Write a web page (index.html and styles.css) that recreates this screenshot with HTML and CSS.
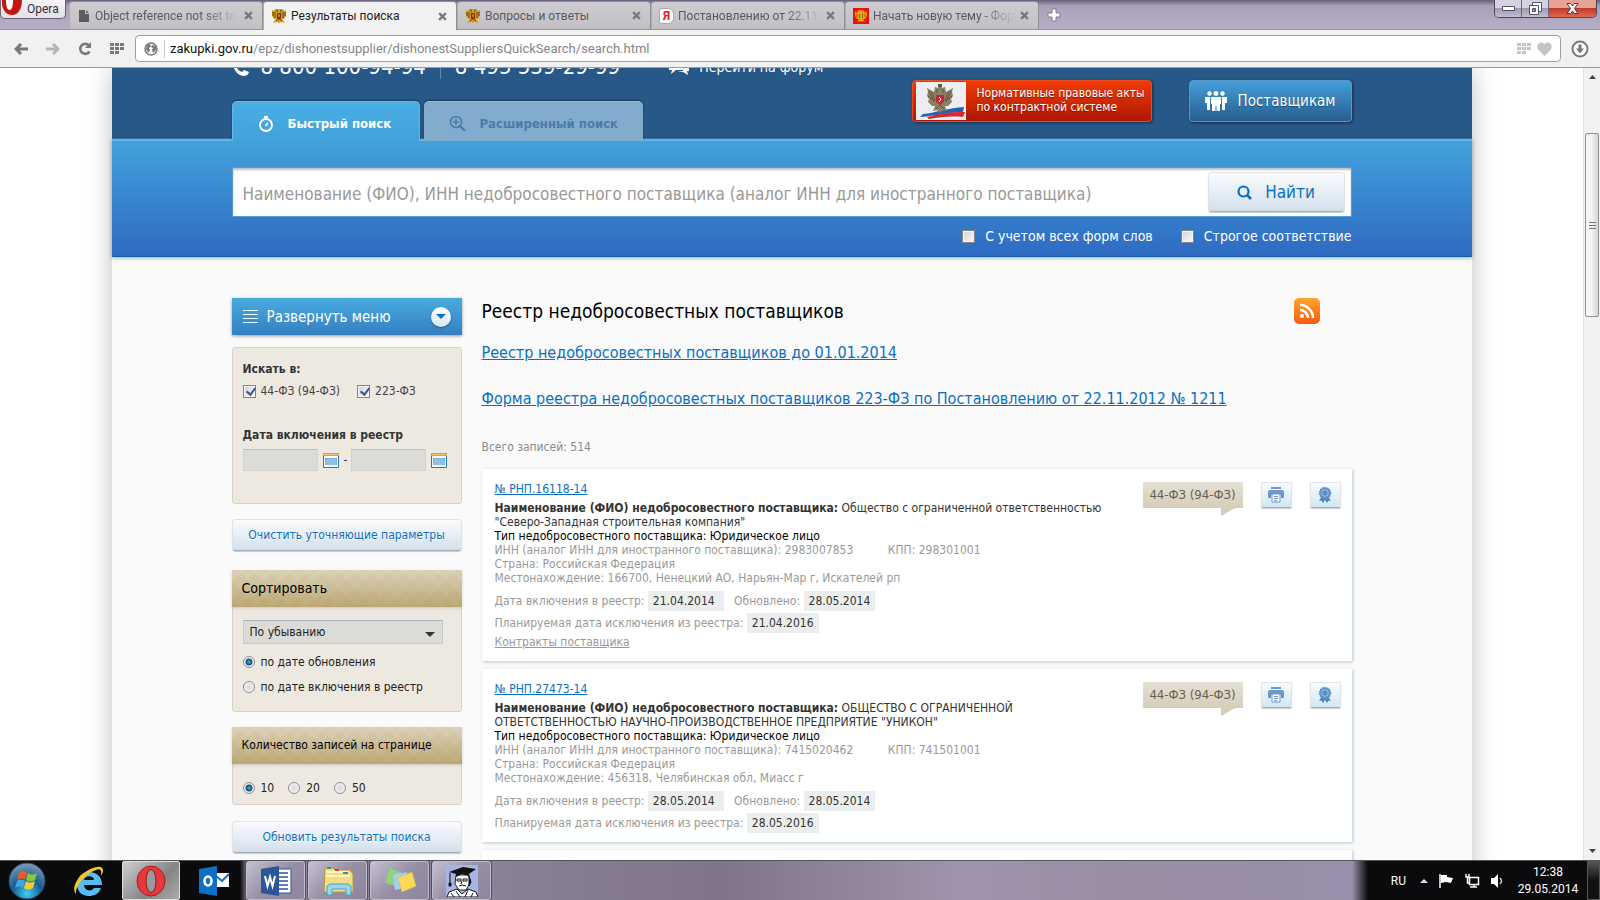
FILE: index.html
```html
<!DOCTYPE html>
<html lang="ru">
<head>
    <meta charset="UTF-8">
    <title>Результаты поиска</title>
    <link rel="stylesheet" href="styles.css">
</head>
<body>
<svg class="defs" width="0" height="0">
    <symbol id="eagle" viewBox="0 0 16 16">
        <path d="M1 2l2 1 1-2 2 1 2-1 2 1 2-1 1 2 2-1v6l-2 3h-2l3 4-4-1-2 1-2-1-4 1 3-4H3L1 8z" fill="#c9a21c"/>
        <path d="M2 4v4M4 4v6M12 4v6M14 4v4M6 1v3M10 1v3M5 13l2-2M11 13l-2-2" stroke="#5d4608" fill="none"/>
        <path d="M6 5h4v5l-2 2-2-2z" fill="#a81818"/>
        <path d="M8 6v3" stroke="#e9c15a"/>
    </symbol>
    <symbol id="eagle-gold" viewBox="0 0 16 16">
        <path d="M0 0h16v16H0z" fill="#ea1208"/>
        <path d="M2 3l2 2 1-3 2 1 1-2 1 2 2-1 1 3 2-2v5l-2 3h-2l2 3-3-1-1 1-1-1-3 1 2-3H4L2 8z" fill="#e5a413"/>
        <path d="M4 6v3M12 6v3M6.500 6v4M9.500 6v4" stroke="#a55c08" fill="none"/>
    </symbol>
    <symbol id="print" viewBox="0 0 16 16">
        <path d="M3 0h10v2H3zM1 3h14l1 2v6h-3V8H3v3H0V5z" fill="#7199c8"/>
        <path d="M4 7h8v8H4z" fill="#fff" stroke="#7199c8"/>
        <path d="M6 9.500h4M6 11.500h4M6 13.500h3" stroke="#7199c8"/>
    </symbol>
    <symbol id="award" viewBox="0 0 14 16">
        <path d="M4 9L1 14l2.500-.5L5 16l2-3 2 3 1.500-2.500L13 14l-3-5z" fill="#4e83bd"/>
        <circle cx="7" cy="6" r="5.500" fill="#5f90c6" stroke="#5f90c6" stroke-width="1.500" stroke-dasharray="1.500 1"/>
        <circle cx="7" cy="6" r="3.300" fill="#5a8cc3" stroke="#a5c3e2"/>
    </symbol>
    <symbol id="calendar" viewBox="0 0 16 15">
        <path d="M.5.5h15v14H.5z" fill="#fff" stroke="#2779b5"/>
        <path d="M0 0h16v3H0z" fill="#f7941d"/>
        <path d="M1 1h14v1H1z" fill="#fbc477"/>
        <path d="M2 5h12v7H2z" fill="#5b9fd6"/>
        <path d="M2 7h12M2 9h12M2 11h12M4 5v8M6 5v8M8 5v8M10 5v8M12 5v8" stroke="#c5e0f3" stroke-width=".6"/>
    </symbol>
    <symbol id="grid" viewBox="0 0 14 11">
        <path d="M0 0h4v3H0zM5 0h4v3H5zM10 0h4v3h-4zM0 4h4v3H0zM5 4h4v3H5zM10 4h4v3h-4zM0 8h4v3H0zM5 8h4v3H5z" fill="currentColor"/>
    </symbol>
    <symbol id="close" viewBox="0 0 8 8">
        <path d="M1 1l6 6M7 1L1 7" stroke="#77777a" stroke-width="2" fill="none"/>
    </symbol>
</svg>

<div class="tabbar">
    <button class="opera"><svg width="20" height="16" viewBox="0 0 20 16"><path d="M0 0h20c0 9-4 15-10 15C5 15 1 11 0 5z" fill="#c41712"/><path d="M4 0h7c0 6-1 10-3.500 10S4 6 4 0z" fill="#fff"/></svg>Opera</button>
    <div class="tabs">
        <div class="tab first"><svg width="10" height="12" viewBox="0 0 10 12"><path d="M0 0h6v4h4v8H0z" fill="#5c5c5e"/><path d="M7 0l3 3H7z" fill="#5c5c5e"/></svg><span class="fade">Object reference not set to an</span><svg class="x"><use href="#close"/></svg></div>
        <div class="tab active"><svg width="16" height="16"><use href="#eagle"/></svg><span>Результаты поиска</span><svg class="x"><use href="#close"/></svg></div>
        <div class="tab"><svg width="16" height="16"><use href="#eagle"/></svg><span>Вопросы и ответы</span><svg class="x"><use href="#close"/></svg></div>
        <div class="tab"><span class="ya">Я</span><span class="fade">Постановлению от 22.11.2012</span><svg class="x"><use href="#close"/></svg></div>
        <div class="tab"><svg width="16" height="16"><use href="#eagle-gold"/></svg><span class="fade">Начать новую тему - Форум</span><svg class="x"><use href="#close"/></svg></div>
    </div>
    <button class="plus" aria-label="Новая вкладка"><svg width="14" height="14" viewBox="0 0 14 14"><path d="M5 1h4v4h4v4H9v4H5V9H1V5h4z" fill="#fff" stroke="#827a90"/></svg></button>
    <div class="winbtns">
        <button aria-label="Свернуть"><svg width="13" height="6" viewBox="0 0 13 6"><path d="M.5.5h12v4H.5z" fill="#fff" stroke="#52526a"/></svg></button>
        <button aria-label="Развернуть"><svg width="13" height="13" viewBox="0 0 13 13"><path d="M3.500.5h9v9h-9z" fill="#fff" stroke="#52526a"/><path d="M.5 3.500h9v9h-9z" fill="#fff" stroke="#52526a"/><path d="M3.500 6.500h3v3h-3z" fill="#8a84a0" stroke="#52526a"/></svg></button>
        <button class="quit" aria-label="Закрыть"><svg width="13" height="11" viewBox="0 0 13 11"><path d="M1 .5h3.500l2 2.500 2-2.500H12L8.500 5.500l3.500 5H8.500l-2-2.500-2 2.500H1l3.500-5z" fill="#fff" stroke="#5c3036"/></svg></button>
    </div>
</div>

<div class="addressbar">
    <button aria-label="Назад"><svg width="14" height="12" viewBox="0 0 14 12"><path d="M7 1L2 6l5 5M2 6h12" fill="none" stroke="#77797c" stroke-width="3"/></svg></button>
    <button aria-label="Вперед"><svg width="14" height="12" viewBox="0 0 14 12"><path d="M7 1l5 5-5 5M0 6h12" fill="none" stroke="#b5b5b5" stroke-width="3"/></svg></button>
    <button aria-label="Обновить"><svg width="14" height="14" viewBox="0 0 14 14"><path d="M11.500 9.500A5 5 0 1 1 11 3.500" fill="none" stroke="#77797c" stroke-width="2.600"/><path d="M13 0v6H7z" fill="#77797c"/></svg></button>
    <button class="speed" aria-label="Экспресс-панель"><svg width="14" height="11"><use href="#grid"/></svg></button>
    <div class="url">
        <svg width="14" height="14" viewBox="0 0 14 14"><circle cx="7" cy="7" r="6" fill="#fff" stroke="#77797c" stroke-width="1.500"/><path d="M3 3l3-1 1 2-2 2 1 2-2 3-2-4zM8 3l4 1v4l-3 3-1-3 1-2-2-1z" fill="#77797c"/></svg>
        <a href="#"><b>zakupki.gov.ru</b>/epz/dishonestsupplier/dishonestSuppliersQuickSearch/search.html</a>
        <svg class="pale" width="14" height="11"><use href="#grid"/></svg>
        <svg width="15" height="14" viewBox="0 0 15 14"><path d="M7.500 14L1 7.500C-1.500 3 3 -2 7.500 2 12-2 16.500 3 14 7.500z" fill="#c4c4c4"/></svg>
    </div>
    <button class="down" aria-label="Загрузки"><svg width="18" height="18" viewBox="0 0 18 18"><circle cx="9" cy="9" r="7.500" fill="#fff" stroke="#77797c" stroke-width="2"/><path d="M7.500 4.500h3v4H13l-4 5-4-5h2.500z" fill="#77797c"/></svg></button>
</div>

<div class="view">
    <div class="scroller">
        <div class="wrapper">
            <div class="header">
                <div class="inner">
                    <div class="left">
                        <div class="phones">
                            <svg width="18" height="18" viewBox="0 0 18 18"><path d="M3 1l3 4-2 2c1 4 3 6 6 7l2-2 5 2c-1 3-3 4-6 4C5 17 1 11 1 5c0-2 1-3 2-4z" fill="#fff"/></svg>
                            <span>8 800 100-94-94</span>
                            <i></i>
                            <span>8 495 539-29-99</span>
                            <a href="#"><svg width="20" height="18" viewBox="0 0 20 18"><path d="M0 0h14v12H7l-5 4 1-4H0z" fill="#fff"/><path d="M15 5l5 2v6h-2l1 4-5-3H8l6-1z" fill="#fff"/></svg>Перейти на форум</a>
                        </div>
                        <div class="searchtabs">
                            <a href="#" class="on"><svg width="16" height="16" viewBox="0 0 16 16"><circle cx="8" cy="9" r="6" fill="none" stroke="#fff" stroke-width="1.800"/><path d="M6 1h4M8 1v2M7.500 10L10 7" stroke="#fff" stroke-width="1.800"/></svg>Быстрый поиск</a>
                            <a href="#" class="off"><svg width="17" height="17" viewBox="0 0 17 17"><circle cx="7" cy="7" r="5.500" fill="none" stroke="#4c7ba8" stroke-width="1.600"/><path d="M7 4v6M4 7h6" stroke="#4c7ba8" stroke-width="1.600"/><path d="M11 11l5 5" stroke="#4c7ba8" stroke-width="2.400"/></svg>Расширенный поиск</a>
                        </div>
                    </div>
                    <div class="right">
                        <a href="#" class="law"><svg width="52" height="38" viewBox="0 0 52 38">
                            <path d="M1 0h50v38H1z" fill="#eceef2"/>
                            <path d="M8 32c12-1 24-6 41-7l-1 5c-14 0-28 4-43 5z" fill="#1e66b4"/>
                            <path d="M12 35c14-4 24-5 38-5l-2 5c-14-1-22 0-34 2z" fill="#dd2630"/>
                            <path d="M12 6l7 4 1-5 3 1 2-4 2 4 3-1 1 5 7-4-1 4 1 4-2 3 1 3-4 4-3 0 2 5-4-1-3 3-3-3-4 1 2-5-3 0-4-4 1-3-2-3 1-4z" fill="#8a8162"/>
                            <path d="M14 9l5 11M17 10l3 9M36 9l-5 11M33 10l-3 9M21 27l4-4 4 4M22 7v4M28 7v4M13 14l4 4M37 14l-4 4" stroke="#5e563a" fill="none"/>
                            <path d="M21 13h8v7l-4 3-4-3z" fill="#c22835"/><path d="M24 15l2 2-2 3" stroke="#fff" fill="none"/>
                            <path d="M23 2h4v3h-4z" fill="#645c40"/></svg><span>Нормативные правовые акты<br>по контрактной системе</span></a>
                        <a href="#" class="suppliers"><svg width="22" height="20" viewBox="0 0 22 20"><g fill="#fff"><circle cx="4.500" cy="2.500" r="2.200"/><circle cx="11" cy="2.500" r="2.400"/><circle cx="17.500" cy="2.500" r="2.200"/><path d="M0 6h5v13H2v-7H0zM17 6h5v6h-2v7h-3zM6 6h10v7h-1v7h-3.500v-5h-1v5H7v-7H6z"/></g></svg>Поставщикам</a>
                    </div>
                </div>
            </div>

            <form class="search">
                <div class="inner">
                    <div class="searchbox">
                        <input type="text" aria-label="Поиск" placeholder="Наименование (ФИО), ИНН недобросовестного поставщика (аналог ИНН для иностранного поставщика)">
                        <button type="button"><svg width="15" height="15" viewBox="0 0 15 15"><circle cx="6.500" cy="6.500" r="5" fill="none" stroke="#0a6fc2" stroke-width="2.200"/><path d="M10 10l4 4" stroke="#0a6fc2" stroke-width="2.500"/></svg>Найти</button>
                    </div>
                    <div class="options">
                        <label><input type="checkbox">С учетом всех форм слов</label>
                        <label><input type="checkbox">Строгое соответствие</label>
                    </div>
                </div>
            </form>

            <div class="main">
                <div class="sidebar">
                    <button class="menu"><svg width="15" height="14" viewBox="0 0 15 14"><path d="M0 .5h15M0 4.500h15M0 8.500h15M0 12.500h15" stroke="#e9f6fd"/></svg><span>Развернуть меню</span><i><svg width="10" height="5" viewBox="0 0 10 5"><path d="M0 0h10L5 5z" fill="#0a72c0"/></svg></i></button>
                    <div class="panel filter">
                        <h4>Искать в:</h4>
                        <div class="checks">
                            <label><input type="checkbox" checked>44-ФЗ (94-ФЗ)</label>
                            <label><input type="checkbox" checked>223-ФЗ</label>
                        </div>
                        <h4>Дата включения в реестр</h4>
                        <div class="dates">
                            <input type="text" aria-label="Дата с">
                            <button aria-label="Календарь"><svg width="16" height="15"><use href="#calendar"/></svg></button>
                            <span>-</span>
                            <input type="text" aria-label="Дата по">
                            <button aria-label="Календарь"><svg width="16" height="15"><use href="#calendar"/></svg></button>
                        </div>
                    </div>
                    <button class="btn">Очистить уточняющие параметры</button>
                    <div class="panel sort">
                        <h3>Сортировать</h3>
                        <div class="body">
                            <div class="select"><select aria-label="Сортировать"><option>По убыванию</option><option>По возрастанию</option></select></div>
                            <label><input type="radio" name="sort" checked>по дате обновления</label>
                            <label><input type="radio" name="sort">по дате включения в реестр</label>
                        </div>
                    </div>
                    <div class="panel count">
                        <h3>Количество записей на странице</h3>
                        <div class="body">
                            <label><input type="radio" name="count" checked>10</label>
                            <label><input type="radio" name="count">20</label>
                            <label><input type="radio" name="count">50</label>
                        </div>
                    </div>
                    <button class="btn">Обновить результаты поиска</button>
                </div>

                <div class="content">
                    <div class="title">
                        <h1>Реестр недобросовестных поставщиков</h1>
                        <a href="#" aria-label="RSS"><svg width="26" height="26" viewBox="0 0 26 26"><defs><linearGradient id="rss" x2="0" y2="1"><stop stop-color="#fda52e"/><stop offset="1" stop-color="#f65a0d"/></linearGradient></defs><rect width="26" height="26" rx="5" fill="url(#rss)"/><circle cx="8" cy="18" r="2" fill="#fff"/><path d="M6 12a8 8 0 0 1 8 8M6 7a13 13 0 0 1 13 13" fill="none" stroke="#fff" stroke-width="2.600"/></svg></a>
                    </div>
                    <a class="biglink" href="#">Реестр недобросовестных поставщиков до 01.01.2014</a>
                    <a class="biglink" href="#">Форма реестра недобросовестных поставщиков 223-ФЗ по Постановлению от 22.11.2012 № 1211</a>
                    <p class="total">Всего записей: 514</p>

                    <div class="card">
                        <div class="info">
                            <a class="num" href="#">№ РНП.16118-14</a>
                            <p class="name"><b>Наименование (ФИО) недобросовестного поставщика:</b> Общество с ограниченной ответственностью "Северо-Западная строительная компания"</p>
                            <p class="type">Тип недобросовестного поставщика: Юридическое лицо</p>
                            <p>ИНН (аналог ИНН для иностранного поставщика): 2983007853 <span class="kpp">КПП: 298301001</span></p>
                            <p>Страна: Российская Федерация</p>
                            <p>Местонахождение: 166700, Ненецкий АО, Нарьян-Мар г, Искателей рп</p>
                            <p class="date">Дата включения в реестр: <span class="val long">21.04.2014</span> Обновлено: <span class="val">28.05.2014</span></p>
                            <p class="date">Планируемая дата исключения из реестра: <span class="val">21.04.2016</span></p>
                            <a class="contracts" href="#">Контракты поставщика</a>
                        </div>
                        <span class="law-tag">44-ФЗ (94-ФЗ)</span>
                        <button aria-label="Печать"><svg width="16" height="16"><use href="#print"/></svg></button>
                        <button aria-label="Подпись"><svg width="14" height="16"><use href="#award"/></svg></button>
                    </div>

                    <div class="card">
                        <div class="info">
                            <a class="num" href="#">№ РНП.27473-14</a>
                            <p class="name"><b>Наименование (ФИО) недобросовестного поставщика:</b> ОБЩЕСТВО С ОГРАНИЧЕННОЙ ОТВЕТСТВЕННОСТЬЮ НАУЧНО-ПРОИЗВОДСТВЕННОЕ ПРЕДПРИЯТИЕ "УНИКОН"</p>
                            <p class="type">Тип недобросовестного поставщика: Юридическое лицо</p>
                            <p>ИНН (аналог ИНН для иностранного поставщика): 7415020462 <span class="kpp">КПП: 741501001</span></p>
                            <p>Страна: Российская Федерация</p>
                            <p>Местонахождение: 456318, Челябинская обл, Миасс г</p>
                            <p class="date">Дата включения в реестр: <span class="val long">28.05.2014</span> Обновлено: <span class="val">28.05.2014</span></p>
                            <p class="date">Планируемая дата исключения из реестра: <span class="val">28.05.2016</span></p>
                        </div>
                        <span class="law-tag">44-ФЗ (94-ФЗ)</span>
                        <button aria-label="Печать"><svg width="16" height="16"><use href="#print"/></svg></button>
                        <button aria-label="Подпись"><svg width="14" height="16"><use href="#award"/></svg></button>
                    </div>

                    <div class="card next"></div>
                </div>
            </div>
        </div>
    </div>
    <div class="scrollbar">
        <svg width="7" height="4" viewBox="0 0 7 4"><path d="M0 4h7L3.500 0z" fill="#444"/></svg>
        <div class="thumb"><i></i></div>
        <svg width="7" height="4" viewBox="0 0 7 4"><path d="M0 0h7L3.500 4z" fill="#444"/></svg>
    </div>
</div>

<div class="taskbar">
    <div class="quick">
        <button aria-label="Пуск"><svg width="38" height="38" viewBox="0 0 38 38"><defs><radialGradient id="orb" cy=".85" r=".9"><stop stop-color="#3ed0f5"/><stop offset=".45" stop-color="#175d92"/><stop offset="1" stop-color="#8da3b8"/></radialGradient></defs><circle cx="19" cy="19" r="18" fill="url(#orb)" stroke="#2c4258"/><path d="M11 11c3-2 5-2 8 0l-2 7c-3-2-5-2-8 0z" fill="#ec5a24"/><path d="M20 11c3 2 5 2 9 0l-2 7c-3 2-6 2-9 0z" fill="#8cc63e"/><path d="M9 19c3-2 5-2 8 0l-2 7c-3-2-5-2-8 0z" fill="#43a4e4"/><path d="M18 19c3 2 5 2 9 0l-2 7c-4 2-6 2-9 0z" fill="#fcca2b"/></svg></button>
        <button aria-label="Internet Explorer"><svg width="34" height="32" viewBox="0 0 34 32"><path d="M31 20H13c0 6 8 7 10 3h7c-2 6-7 8-12 8C10 31 6 26 6 19S11 7 18 7c8 0 13 5 13 13zm-8-5c0-5-9-5-10 0z" fill="#57bcf1"/><path d="M5 29C-1 23 9 5 26 2c6-1 8 3 4 9 1-6-1-8-5-6C15 8 4 21 5 29z" fill="#f9c526"/></svg></button>
        <button class="lit" aria-label="Opera"><svg width="30" height="32" viewBox="0 0 30 32"><ellipse cx="15" cy="16" rx="14" ry="15" fill="#e8383e" stroke="#a01e24"/><ellipse cx="15" cy="16" rx="5" ry="11.500" fill="#9a9a9a" stroke="#8e191d"/></svg></button>
        <button aria-label="Outlook"><svg width="32" height="32" viewBox="0 0 32 32"><path d="M18 8h13v14H18z" fill="#fff"/><path d="M18 11l6 5 7-7" fill="none" stroke="#0a6cc0" stroke-width="2"/><path d="M1 4l18-3v30L1 28z" fill="#0f6fc5"/><ellipse cx="10" cy="16" rx="3.500" ry="4.500" fill="none" stroke="#fff" stroke-width="2.600"/></svg></button>
    </div>
    <div class="tasks">
        <button aria-label="Word"><svg width="32" height="32" viewBox="0 0 32 32"><path d="M17 4h14v24H17z" fill="#fff" stroke="#2b579a"/><path d="M19 8h9M19 12h9M19 16h9M19 20h9M19 24h9" stroke="#2b579a" stroke-width="1.500"/><path d="M1 4l18-3v30L1 28z" fill="#2b579a"/><path d="M5 11l2.500 10L10 12l2.500 9L15 11" fill="none" stroke="#fff" stroke-width="2"/></svg></button>
        <button aria-label="Проводник"><svg width="34" height="32" viewBox="0 0 34 32"><path d="M4 3h8l2 2h15l3 4v18H3z" fill="#f4dd87" stroke="#b8963d"/><path d="M5 7h22M5 11h24" stroke="#fff3bb" stroke-width="2"/><path d="M6 3h4" stroke="#29a84d" stroke-width="2"/><path d="M14 5h4" stroke="#d53d30" stroke-width="2"/><path d="M22 8h5" stroke="#318ad0" stroke-width="2"/><path d="M6 30V21l3-2h18l3 2v9h-5v-6H11v6z" fill="#98d7ee" stroke="#4a9fc4"/></svg></button>
        <button aria-label="Записки"><svg width="34" height="28" viewBox="0 0 34 28"><path d="M7 1l12 5-6 13-11-3z" fill="#91d37c"/><path d="M10 8l14-3 2 15-14 3z" fill="#a3cff0"/><path d="M15 11l14-6 4 14-14 6z" fill="#fbd957" stroke="#deb93a" stroke-width=".5"/></svg></button>
        <button aria-label="Консультант"><svg width="32" height="32" viewBox="0 0 32 32"><path d="M0 0h32v32H0z" fill="#a8b4e4"/><path d="M10 10h13l1 8-4 7h-7l-4-6z" fill="#fff" stroke="#222"/><path d="M1 32l2-5 8-3 5 5 6-5 8 3 2 5z" fill="#fff" stroke="#111"/><path d="M10 26l4 6M22 25l-3 7M5 28l3 4M27 28l-2 4" stroke="#111"/><path d="M3 7l14-5 13 2-7 5v2l-7-2-6 3V9z" fill="#111"/><path d="M4 8v10M3 18h2v3H3zM23 11l2 6-2 4z" fill="#111" stroke="#111"/><path d="M11 14h4v2h-4zM17 14h4v2h-4zM13 21l3-1 4 1M16 16l-1 3" fill="none" stroke="#111"/></svg></button>
    </div>
    <div class="tray">
        <span class="lang">RU</span>
        <svg width="8" height="4" viewBox="0 0 8 4"><path d="M0 4h8L4 0z" fill="#dfe4ea"/></svg>
        <svg width="15" height="14" viewBox="0 0 15 14"><path d="M1 0v14" stroke="#fff" stroke-width="1.500"/><path d="M2 1h6v2l6 1-2 5-5-1-5 1z" fill="#fff"/></svg>
        <svg width="15" height="14" viewBox="0 0 15 14"><path d="M4.500 3.500h9v7h-9zM5 13h7M9 11v2M1 0v3h3V0M2.500 3v6H5" fill="none" stroke="#fff" stroke-width="1.500"/></svg>
        <svg width="13" height="14" viewBox="0 0 13 14"><path d="M0 4h3l4-4v14l-4-4H0z" fill="#fff"/><path d="M9 4q3 3 0 6" fill="none" stroke="#ccc" stroke-width="1.500"/></svg>
        <div class="clock">12:38<br>29.05.2014</div>
        <button aria-label="Показать рабочий стол"></button>
    </div>
</div>
</body>
</html>
```
FILE: styles.css
```css
* {
    margin: 0;
    padding: 0;
    box-sizing: border-box;
}

body {
    height: 100vh;
    display: flex;
    flex-direction: column;
    overflow: hidden;
    font-size: 12px;
    line-height: 14px;
    font-family: Tahoma, "DejaVu Sans Condensed", "Noto Sans", sans-serif;
    color: #333;
}

button, input, select {
    font: inherit;
    color: inherit;
    border: 0;
    background: none;
}

svg {
    flex: none;
    display: block;
}

.defs {
    position: absolute;
}

/* browser window */
.tabbar, .addressbar, .taskbar {
    font-family: "Segoe UI", Roboto, sans-serif;
}

.tabbar {
    height: 30px;
    flex: none;
    display: flex;
    background: linear-gradient(#66607a 0, #aaa1b8 6px, #b7aec8 100%);
    border-bottom: 1px solid #98969c;
}

.opera {
    width: 66px;
    height: 19px;
    display: flex;
    gap: 5px;
    padding-left: 1px;
    background: linear-gradient(#f7f5f8, #e2dfe5);
    border: 1px solid #66646a;
    border-top: 0;
    border-radius: 0 0 5px 5px;
    line-height: 19px;
}

.tabs {
    display: flex;
    margin: 1px 0 0 3px;
}

.tab {
    width: 194px;
    height: 28px;
    display: flex;
    align-items: center;
    gap: 4px;
    padding: 0 9px 0 7px;
    background: linear-gradient(#cfccd1, #c3c0c5);
    border: 1px solid #8f8d93;
    border-bottom: 0;
    border-left-color: #b0aeb3;
    border-radius: 4px 4px 0 0;
    color: #5a5a5d;
}

.tab.first {
    gap: 6px;
    padding-left: 9px;
}

.tab.active {
    height: 29px;
    background: #f1f1f2;
    color: #222;
    margin-bottom: -1px;
}

.tab span {
    flex: 1;
    min-width: 0;
    overflow: hidden;
    white-space: nowrap;
    line-height: 18px;
}

.tab .fade {
    -webkit-mask-image: linear-gradient(90deg, #000 75%, transparent);
    mask-image: linear-gradient(90deg, #000 75%, transparent);
}

.tab .x {
    width: 9px;
    height: 9px;
}

.tab .ya {
    flex: none;
    width: 15px;
    height: 16px;
    text-align: center;
    background: #fff;
    border: 1px solid #aaa;
    border-radius: 2px 6px 6px 2px;
    color: #e02020;
    font-weight: bold;
    line-height: 14px;
}

.plus {
    width: 30px;
    display: flex;
    align-items: center;
    justify-content: center;
}

.winbtns {
    display: flex;
    height: 18px;
    margin: 0 3px 0 auto;
    border: 1px solid #4b475a;
    border-top: 0;
    border-radius: 0 0 5px 5px;
    overflow: hidden;
}

.winbtns button {
    width: 27px;
    display: flex;
    align-items: center;
    justify-content: center;
    background: linear-gradient(#d6d2df 50%, #9f98b0 50%, #c5bfd2);
    border-right: 1px solid #6b667c;
}

.winbtns .quit {
    width: 47px;
    background: linear-gradient(#e5a295 45%, #c2392a 50%, #dd6a50);
    border: 0;
}

.addressbar {
    height: 38px;
    flex: none;
    display: flex;
    align-items: center;
    padding: 0 5px;
    background: #f1f1f2;
    border-bottom: 1px solid #9d9d9f;
}

.addressbar button {
    width: 32px;
    height: 30px;
    display: flex;
    align-items: center;
    justify-content: center;
    color: #77797c;
}

.addressbar .speed {
    margin-right: 2px;
}

.addressbar .down {
    width: 30px;
}

.url {
    flex: 1;
    height: 27px;
    display: flex;
    align-items: center;
    gap: 6px;
    margin-right: 4px;
    padding: 0 8px;
    background: #fff;
    border: 1px solid #a0a0a2;
    border-radius: 4px;
}

.url a {
    flex: 1;
    padding-left: 5px;
    border-left: 1px solid #ccc;
    font-size: 13px;
    line-height: 18px;
    color: #85858a;
    text-decoration: none;
}

.url b {
    font-weight: normal;
    color: #111;
}

.url .pale {
    color: #c4c4c4;
}

/* page */
.view {
    flex: 1;
    min-height: 0;
    display: flex;
    overflow: hidden;
    background: #fff;
}

.scroller {
    flex: 1;
    overflow: hidden;
}

.wrapper {
    max-width: 1360px;
    min-height: 100%;
    margin: 0 auto;
    background: #fafafa;
    box-shadow: 0 0 24px rgba(0, 0, 0, .25);
}

.inner {
    max-width: 1120px;
    margin: 0 auto;
}

.header {
    background: #285888;
    border-bottom: 1px solid #3b7bb3;
}

.header .inner {
    height: 70px;
    display: flex;
    justify-content: space-between;
}

.left {
    display: flex;
    flex-direction: column;
    justify-content: space-between;
}

.phones {
    display: flex;
    align-items: center;
    gap: 11px;
    margin-top: -13px;
    height: 24px;
    font-size: 22px;
    line-height: 24px;
    color: #fff;
    white-space: nowrap;
}

.phones i {
    width: 1px;
    height: 24px;
    margin: 0 3px;
    background: #6388ad;
}

.phones a {
    display: flex;
    gap: 10px;
    margin-left: 38px;
    font-size: 14px;
    line-height: 18px;
    color: #fff;
    text-decoration: none;
}

.searchtabs {
    display: flex;
    align-items: flex-end;
    gap: 4px;
    margin-bottom: -3px;
}

.searchtabs a {
    display: flex;
    align-items: center;
    gap: 14px;
    height: 40px;
    padding: 4px 0 0 25px;
    border-radius: 5px 5px 0 0;
    font-size: 13px;
    font-weight: bold;
    text-decoration: none;
}

.searchtabs .on {
    position: relative;
    width: 188px;
    background: linear-gradient(#49afe4, #43a1da);
    border: 1px solid #66b7ec;
    border-bottom: 0;
    box-shadow: 0 -1px 2px rgba(0, 0, 0, .4);
    color: #fff;
}

.searchtabs .off {
    width: 219px;
    background: #81accd;
    border-top: 1px solid #95bbd8;
    box-shadow: 0 -1px 2px rgba(0, 0, 0, .4);
    color: #4c7ba8;
}

.right {
    display: flex;
    gap: 37px;
    padding-top: 12px;
}

.right a {
    height: 42px;
    display: flex;
    align-items: center;
    border-radius: 4px;
    box-shadow: 1px 1px 3px rgba(0, 0, 0, .5);
    color: #fff;
    text-decoration: none;
    text-shadow: 0 1px 1px rgba(0, 0, 0, .4);
}

.right .law {
    width: 240px;
    gap: 10px;
    padding-left: 2px;
    background: linear-gradient(#f13c06, #ad1702);
    border: 1px solid #f04a20;
    white-space: nowrap;
}

.right .law span {
    padding-bottom: 2px;
}

.right .suppliers {
    width: 163px;
    gap: 11px;
    padding-left: 15px;
    background: linear-gradient(#43a0da, #285c8e);
    border: 1px solid #5c94c4;
    font-size: 15px;
}

.search {
    height: 118px;
    padding-top: 26px;
    background: linear-gradient(#43a1da, #2e6ac2);
    border-top: 2px solid #66b2e8;
    border-bottom: 1px solid #1060b0;
    box-shadow: 0 1px 4px rgba(0, 0, 0, .35);
}

.searchbox {
    display: flex;
    height: 50px;
    padding: 4px 6px 4px 10px;
    background: #fff;
    border: 1px solid #50a0d8;
    border-radius: 2px;
    box-shadow: inset 0 2px 2px rgba(0, 0, 0, .25);
}

.searchbox input {
    flex: 1;
    min-width: 0;
    padding-top: 3px;
    font-size: 17px;
    outline: 0;
}

.searchbox input::placeholder {
    color: #999;
}

.searchbox button, .btn, .card button {
    background: linear-gradient(#fafbfd, #d3e0ec);
    border: 1px solid #dde3e9;
    border-bottom-color: #a8adb3;
    border-radius: 4px;
    box-shadow: 0 1px 1px rgba(0, 0, 0, .2);
    color: #0a6fc2;
}

.searchbox button {
    width: 137px;
    display: flex;
    align-items: center;
    justify-content: center;
    gap: 13px;
    font-size: 17px;
}

.options {
    display: flex;
    justify-content: flex-end;
    gap: 28px;
    margin-top: 10px;
    font-size: 14px;
    line-height: 18px;
    color: #fff;
}

.options label {
    display: flex;
    align-items: center;
    gap: 10px;
}

input[type=checkbox] {
    appearance: none;
    flex: none;
    width: 13px;
    height: 13px;
    background: linear-gradient(135deg, #cfd2d6, #fafafa);
    border: 1px solid #83858a;
    box-shadow: inset 0 0 0 1px #f4f4f4;
}

.checks input:checked::before {
    content: "";
    display: block;
    width: 4px;
    height: 7px;
    margin: 0 0 0 4px;
    border: solid #41529a;
    border-width: 0 2px 2px 0;
    transform: rotate(38deg);
}

input[type=radio] {
    appearance: none;
    flex: none;
    width: 12px;
    height: 12px;
    background: radial-gradient(#d8dade, #f6f6f6);
    border: 1px solid #8c8e92;
    border-radius: 50%;
    box-shadow: inset 0 0 0 1px #f4f4f4;
}

input[type=radio]:checked {
    background: radial-gradient(circle, #4db2e4 0, #12496c 3px, #e8e8e8 4px);
}

.main {
    max-width: 1120px;
    margin: 0 auto;
    padding-top: 41px;
    display: flex;
    gap: 20px;
}

.sidebar {
    flex: none;
    width: 230px;
}

.menu {
    width: 100%;
    height: 37px;
    display: flex;
    align-items: center;
    gap: 9px;
    padding: 0 11px;
    background: linear-gradient(#48acde, #347fc2);
    box-shadow: 0 1px 3px rgba(0, 0, 0, .4);
    color: #fff;
    font-size: 15px;
    text-align: left;
}

.menu span {
    flex: 1;
    white-space: nowrap;
}

.menu i {
    width: 20px;
    height: 20px;
    display: flex;
    align-items: center;
    justify-content: center;
    background: linear-gradient(#fff, #d3e9f4);
    border-radius: 50%;
    box-shadow: 0 1px 2px rgba(0, 0, 0, .4);
}

.panel {
    background: #ede9e1;
    border: 1px solid #d7d2c5;
    border-radius: 3px;
}

.panel label {
    display: flex;
    align-items: center;
    gap: 6px;
    color: #222;
    white-space: nowrap;
}

.filter {
    height: 157px;
    margin: 12px 0 15px;
    padding: 14px 10px;
}

.filter h4 {
    font-size: 12px;
    white-space: nowrap;
}

.checks {
    display: flex;
    gap: 17px;
    margin: 8px 0 30px;
}

.filter label {
    gap: 5px;
    color: #444;
}

.dates {
    display: flex;
    align-items: center;
    margin-top: 7px;
}

.dates input {
    width: 75px;
    height: 22px;
    background: #dbdcd7;
    border: 1px solid #d2d2cc;
    border-top-color: #bfc0bb;
}

.dates button {
    margin: 0 5px;
}

.dates span {
    margin-right: 4px;
}

.btn {
    display: block;
    width: 100%;
    height: 32px;
    text-shadow: 0 1px 0 #fff;
    white-space: nowrap;
}

.sort {
    margin: 19px 0 15px;
}

.panel h3 {
    height: 37px;
    margin: -1px -1px 0;
    padding-left: 10px;
    background: repeating-linear-gradient(45deg, rgba(120, 90, 20, .07) 0 1px, transparent 1px 2px), repeating-linear-gradient(-45deg, rgba(120, 90, 20, .07) 0 1px, transparent 1px 2px), linear-gradient(#e2dac3, #bfad7b);
    box-shadow: 0 1px 3px rgba(0, 0, 0, .15);
    font-size: 12px;
    font-weight: normal;
    line-height: 37px;
    color: #000;
    white-space: nowrap;
}

.panel.sort h3 {
    font-size: 14px;
}

.sort .body {
    display: flex;
    flex-direction: column;
    gap: 11px;
    padding: 13px 10px 17px;
}

.select {
    width: 200px;
    position: relative;
}

.select::after {
    content: "";
    position: absolute;
    right: 8px;
    top: 12px;
    border: 5px solid transparent;
    border-top-color: #333;
    border-bottom: 0;
    pointer-events: none;
}

.select select {
    display: block;
    appearance: none;
    width: 100%;
    height: 24px;
    padding: 0 6px;
    background: #dbdcd7;
    border: 1px solid #bccdd6;
    border-top-color: #a3b3bd;
    color: #222;
}

.count {
    margin-bottom: 16px;
}

.count .body {
    display: flex;
    gap: 14px;
    padding: 17px 10px 9px;
}

.content {
    flex: 1;
    min-width: 0;
}

.title {
    display: flex;
    justify-content: space-between;
    align-items: flex-start;
    padding-right: 32px;
}

h1 {
    font-size: 19px;
    font-weight: normal;
    line-height: 26px;
    color: #000;
}

.biglink {
    display: block;
    margin: 19px 0 26px;
    font-size: 16px;
    line-height: 20px;
    color: #0a6fc2;
}

.biglink + .biglink {
    margin: 0;
}

.total {
    margin: 31px 0 15px;
    color: #8a8a8a;
}

.card {
    display: flex;
    align-items: flex-start;
    margin-bottom: 8px;
    padding: 13px 11px 9px 13px;
    background: #fff;
    box-shadow: 1px 1px 3px #b4c8d4;
    color: #999;
}

.card .info {
    width: 632px;
    margin-right: auto;
}

.card a {
    display: block;
    width: max-content;
}

.card .num {
    margin-bottom: 5px;
    color: #0a6fc2;
}

.card .name {
    color: #333;
}

.card .type {
    color: #000;
}

.kpp {
    margin-left: 31px;
}

.date {
    margin-top: 6px;
    line-height: 20px;
}

.date + .date {
    margin-top: 2px;
}

.val {
    display: inline-block;
    padding: 0 5px;
    background: #eceeee;
    color: #333;
}

.val.long {
    padding-right: 9px;
    margin-right: 7px;
}

.contracts {
    margin: 2px 0 3px;
    color: #999;
}

.law-tag {
    position: relative;
    width: 100px;
    height: 26px;
    font-size: 13px;
    line-height: 25px;
    text-align: center;
    background: linear-gradient(#e6e1d6, #d6cdb8);
    color: #666050;
    white-space: nowrap;
}

.law-tag::after {
    content: "";
    position: absolute;
    right: 8px;
    top: 26px;
    border-top: 8px solid #d6cdb8;
    border-left: 14px solid transparent;
    border-left-width: 0;
    border-right: 14px solid transparent;
}

.card button {
    width: 31px;
    height: 26px;
    margin-left: 18px;
    display: flex;
    align-items: center;
    justify-content: center;
    border-radius: 2px;
    background: linear-gradient(#f8fcfe, #d0e6f2);
}

.card.next {
    min-height: 173px;
}

.scrollbar {
    width: 17px;
    flex: none;
    display: flex;
    flex-direction: column;
    align-items: center;
    padding: 7px 1px;
    background: #f1f1f1;
    border-left: 1px solid #e2e2e2;
}

.thumb {
    width: 100%;
    height: 184px;
    margin: 54px 0 auto;
    display: flex;
    align-items: center;
    justify-content: center;
    background: linear-gradient(90deg, #f5f5f5 45%, #d4d4d6);
    border: 1px solid #929296;
    border-radius: 2px;
}

.thumb i {
    width: 7px;
    height: 7px;
    background: repeating-linear-gradient(#777 0 1px, transparent 1px 3px);
}

/* windows taskbar */
.taskbar {
    height: 40px;
    flex: none;
    display: flex;
    background: linear-gradient(90deg, #0b0a0c 15%, #8b8499 15.500%, #8a8296 30%, #807488 45%, #a094ac 60%, #998ca3 72%, #9a90ab 84.500%, #0b0a0c 85.500%);
    border-top: 1px solid #555;
}

.taskbar button {
    width: 60px;
    height: 39px;
    display: flex;
    align-items: center;
    justify-content: center;
}

.quick, .tasks {
    display: flex;
}

.quick {
    width: 246px;
    padding-left: 1px;
}

.quick button:first-child {
    width: 52px;
}

.quick button:nth-child(2) {
    width: 69px;
}

.quick .lit {
    width: 58px;
    margin-right: 4px;
    background: linear-gradient(135deg, #cfcfcf, #858585 60%, #aaa);
    border: 1px solid #ddd;
    border-radius: 2px;
}

.tasks {
    gap: 3px;
}

.tasks button {
    width: 59px;
    background: linear-gradient(135deg, #c5c1d0, #968fa6 50%, #8e869e);
    border: 1px solid #c2bdca;
    border-radius: 3px;
    box-shadow: 0 0 0 1px #55505f;
}

.tray {
    display: flex;
    align-items: center;
    gap: 11px;
    margin-left: auto;
    color: #fff;
}

.tray .lang {
    margin-right: 3px;
}

.tray .clock {
    width: 76px;
    text-align: center;
    line-height: 17px;
    margin-left: -5px;
}

.tray button {
    width: 13px;
    border: 1px solid #555;
    background: linear-gradient(#555, #111 50%);
    margin-left: -10px;
}
```
